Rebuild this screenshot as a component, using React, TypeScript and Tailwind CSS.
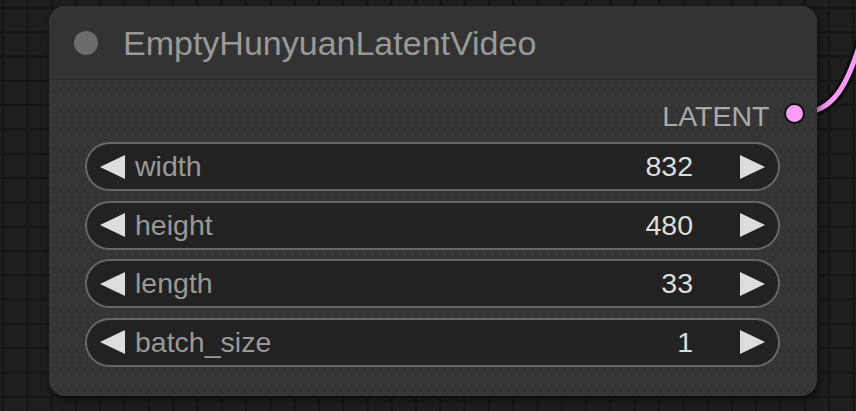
import React from "react";

const LeftTri = () => (
  <svg width="25" height="24" viewBox="0 0 25 24" className="shrink-0">
    <polygon points="0,12 25,0 25,24" fill="#dddddd" />
  </svg>
);

const RightTri = () => (
  <svg width="25" height="24" viewBox="0 0 25 24" className="shrink-0">
    <polygon points="25,12 0,0 0,24" fill="#dddddd" />
  </svg>
);

const widgets = [
  { name: "width", value: "832" },
  { name: "height", value: "480" },
  { name: "length", value: "33" },
  { name: "batch_size", value: "1" },
];

function Widget({ name, value }: { name: string; value: string }) {
  return (
    <div className="h-[49px] w-[695px] rounded-full border-2 border-[#676767] bg-[#222222] flex items-center pl-[13px] pr-[13px]">
      <LeftTri />
      <span className="ml-[10px] text-[28.5px] text-[#999999] leading-none">{name}</span>
      <span className="ml-auto text-[28.5px] text-[#dddddd] leading-none">{value}</span>
      <span className="ml-[47px] flex">
        <RightTri />
      </span>
    </div>
  );
}

export default function App() {
  return (
    <div
      className="relative w-[856px] h-[411px] overflow-hidden bg-[#1e1e1e] bg-[linear-gradient(to_right,#151515_2px,transparent_2px),linear-gradient(to_bottom,#151515_2px,transparent_2px)] bg-[size:24.3px_24.3px] bg-[position:2px_7px] pl-[49px] pt-[6px]"
      style={{ fontFamily: '"Liberation Sans", Arial, sans-serif' }}
    >
      <svg className="absolute left-0 top-0" width="856" height="411" viewBox="0 0 856 411">
        <path d="M 800 113 C 832 113, 848 88, 864 30" fill="none" stroke="#0e0e0e" strokeWidth="11" />
        <path d="M 800 113 C 832 113, 848 88, 864 30" fill="none" stroke="#ff9cf9" strokeWidth="5" />
      </svg>
      <div className="relative w-[768px] h-[390px] rounded-[16px] bg-[#353535] shadow-[2px_4px_10px_rgba(0,0,0,0.55)] flex flex-col overflow-hidden">
        <div className="h-[74px] shrink-0 bg-[#333333] flex items-center pl-[24.5px] border-b border-[#2a2a2a]">
          <div className="w-[24px] h-[24px] rounded-full bg-[#6b6b6b]" />
          <span className="ml-[25.5px] text-[34px] text-[#999999] leading-none">EmptyHunyuanLatentVideo</span>
        </div>
        <div className="flex-1 flex flex-col bg-[radial-gradient(circle,rgba(255,255,255,0.035)_0.8px,transparent_1px)] bg-[size:8px_10px]">
          <div className="h-[40px] mt-[16px] flex items-center justify-end pr-[12.5px]">
            <span className="text-[28.5px] text-[#aaaaaa] leading-none">LATENT</span>
            <div className="ml-[14px] mb-[5px] w-[21px] h-[21px] rounded-full bg-[#ff9cf9] border-[2.5px] border-[#111111]" />
          </div>
          <div className="mt-[6px] ml-[36px] flex flex-col gap-[9.5px]">
            {widgets.map((w) => (
              <Widget key={w.name} name={w.name} value={w.value} />
            ))}
          </div>
        </div>
      </div>
    </div>
  );
}
